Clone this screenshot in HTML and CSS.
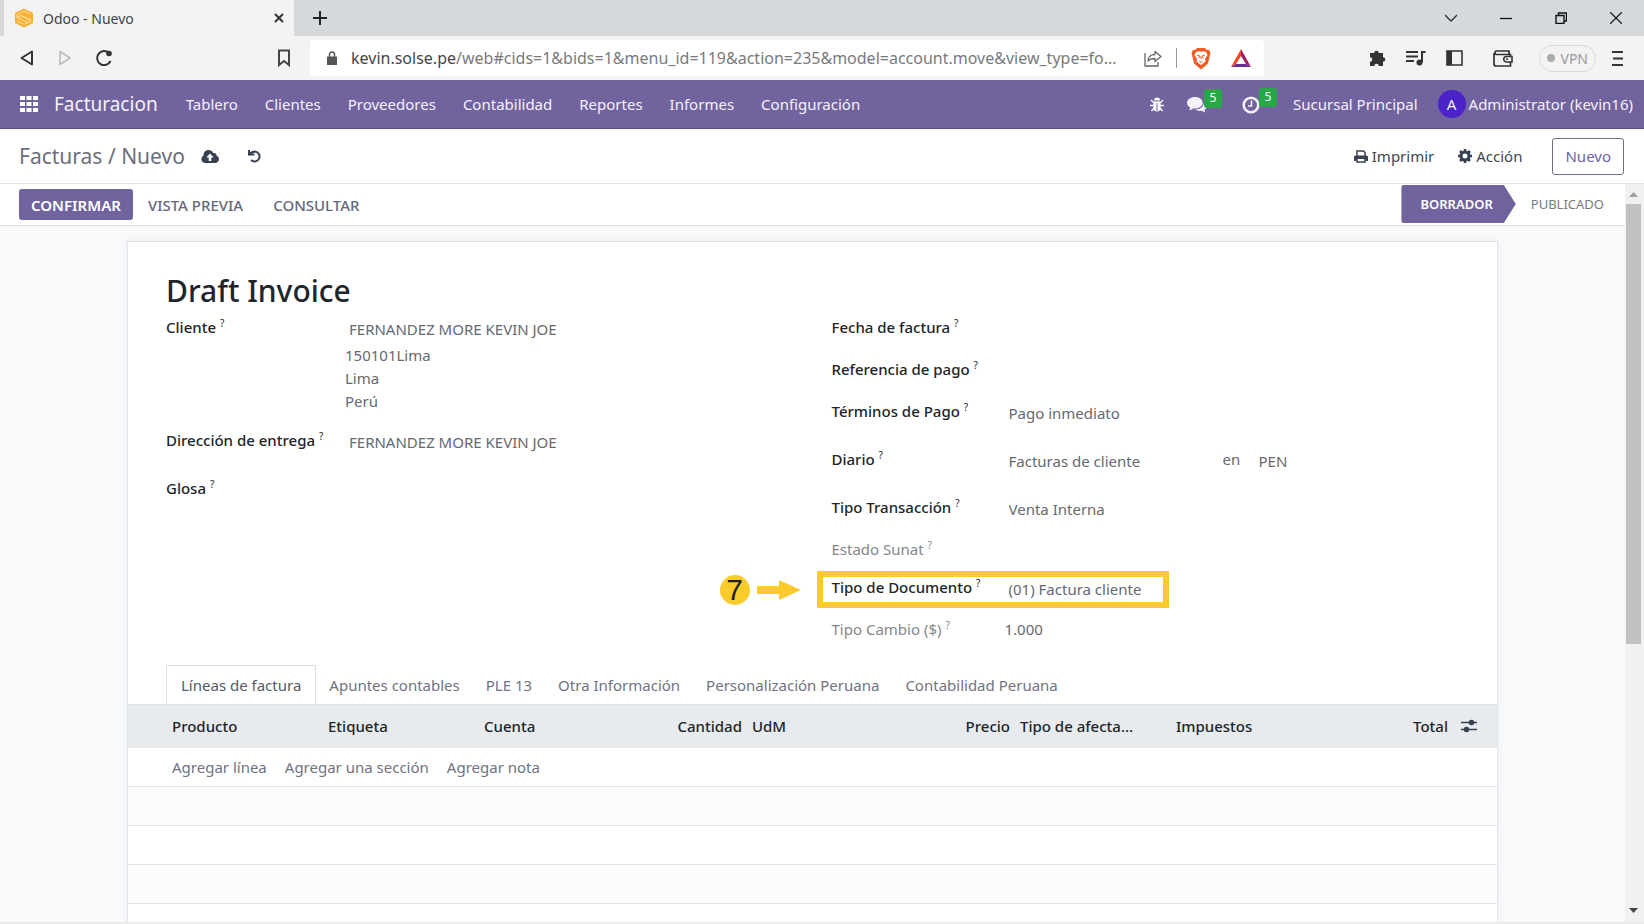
FILE: index.html
```html
<!DOCTYPE html>
<html lang="es">
<head>
	<meta charset="UTF-8">
	<title>Odoo - Nuevo</title>
	<link rel="stylesheet" href="styles.css">
</head>
<body>
	<div class="tabstrip">
		<div class="tab">
			<svg class="favicon" width="20" height="20" viewBox="0 0 20 20"><path d="M10 0.500 19 5v10l-9 4.500L1 15V5z" fill="#fbb034"/><path d="M3 6.500 10 3l6 3M3 9.500l4-2 10 5M3 7v2.500l11 5.500M6 7l11 5M3 13l7 3.500 7-3.500" fill="none" stroke="#fde3ae" stroke-width="1"/></svg>
			<span class="tab-title">Odoo - Nuevo</span>
			<button class="icon-btn" aria-label="Cerrar pestaña"><svg width="12" height="12" viewBox="0 0 12 12"><path d="M2 2l8 8M10 2l-8 8" stroke="#333" stroke-width="2"/></svg></button>
		</div>
		<button class="icon-btn new-tab" aria-label="Nueva pestaña"><svg width="14" height="14" viewBox="0 0 14 14"><path d="M7 0v14M0 7h14" stroke="#222" stroke-width="2"/></svg></button>
		<div class="window-btns">
			<button class="icon-btn" aria-label="Buscar pestañas"><svg width="12" height="12" viewBox="0 0 12 12"><path d="M0 3l6 6 6-6" fill="none" stroke="#333" stroke-width="1.300"/></svg></button>
			<button class="icon-btn" aria-label="Minimizar"><svg width="12" height="12" viewBox="0 0 12 12"><path d="M0 6.500h12" stroke="#111" stroke-width="1.300"/></svg></button>
			<button class="icon-btn" aria-label="Restaurar"><svg width="12" height="12" viewBox="0 0 12 12"><path d="M1 3.500h8v8H1zM3.500 3V1H11.500v8H9.500" fill="none" stroke="#111" stroke-width="1.400"/></svg></button>
			<button class="icon-btn" aria-label="Cerrar"><svg width="12" height="12" viewBox="0 0 12 12"><path d="M0 0l12 12M12 0L0 12" stroke="#222" stroke-width="1.300"/></svg></button>
		</div>
	</div>

	<div class="toolbar">
		<div class="history">
			<button class="icon-btn" aria-label="Atrás"><svg width="16" height="18" viewBox="0 0 16 18"><path d="M13 2.500v13L2.500 9z" fill="none" stroke="#333" stroke-width="2" stroke-linejoin="round"/></svg></button>
			<button class="icon-btn" aria-label="Adelante"><svg width="16" height="18" viewBox="0 0 16 18"><path d="M3 2.500v13L13 9z" fill="none" stroke="#bbb" stroke-width="1.600" stroke-linejoin="round"/></svg></button>
			<button class="icon-btn" aria-label="Recargar"><svg width="18" height="18" viewBox="0 0 18 18"><path d="M15.500 12A7 7 0 1 1 14 4" fill="none" stroke="#333" stroke-width="2"/><circle cx="14" cy="4.500" r="2.800" fill="#333"/></svg></button>
		</div>
		<button class="icon-btn bookmark" aria-label="Marcador"><svg width="14" height="18" viewBox="0 0 14 18"><path d="M2 1.500h10v14.500l-5-4-5 4z" fill="none" stroke="#444" stroke-width="2"/></svg></button>
		<div class="address">
			<svg width="10" height="14" viewBox="0 0 10 14"><path d="M0 5.500h10V14H0z" fill="#555"/><path d="M2.500 6V3.500a2.500 2.500 0 0 1 5 0V6" fill="none" stroke="#555" stroke-width="1.500"/></svg>
			<a class="url" href="#"><span class="host">kevin.solse.pe</span>/web#cids=1&amp;bids=1&amp;menu_id=119&amp;action=235&amp;model=account.move&amp;view_type=fo...</a>
			<button class="icon-btn" aria-label="Compartir"><svg width="18" height="18" viewBox="0 0 18 18"><path d="M1 4v13h13v-4" fill="none" stroke="#666" stroke-width="1.300"/><path d="M4 12c0-4 3-6.500 7-6.500V2.500l6 5-6 5V9.500c-3 0-5 0-7 2.500z" fill="none" stroke="#666" stroke-width="1.300" stroke-linejoin="round"/></svg></button>
			<span class="separator"></span>
			<button class="icon-btn" aria-label="Brave Shields"><svg width="20" height="23" viewBox="0 0 20 23"><path d="M6 1h8l1.500 1.800L18 3l1.500 3-.7 2.500-1.800 8L10 22.500 3 16.500l-1.800-8L.5 6 2 3l2.500-.2z" fill="#f15a22"/><path d="M5 5l3-.7 2 .5 2-.5 3 .7 1.500 3-2.500 4 .5 2.500L10 18l-4.500-3.500.5-2.500-2.500-4z" fill="#fff"/><path d="M6 8l2.500.8-.6 2.700M14 8l-2.500.8.6 2.700M10 9v3M8.500 14.500l1.500.8 1.500-.8" fill="none" stroke="#f15a22" stroke-width="1"/></svg></button>
			<button class="icon-btn rewards" aria-label="Brave Rewards"><svg width="22" height="20" viewBox="0 0 22 20"><path d="M11 1 1 19l5-3 5-8z" fill="#ff4724"/><path d="M11 1l10 18-5-3-5-8z" fill="#9e1f63"/><path d="M1 19h20l-5-3H6z" fill="#662d91"/></svg></button>
		</div>
		<div class="extensions">
			<button class="icon-btn" aria-label="Extensiones"><svg width="18" height="18" viewBox="0 0 18 18"><path d="M2 4h4.200a2.300 2.300 0 1 1 4.600 0H15v4.200a2.300 2.300 0 1 1 0 4.600V17h-4.200a2.200 2.200 0 0 0-4.400 0H2v-4.200a2.200 2.200 0 0 0 0-4.500z" fill="#333"/></svg></button>
			<button class="icon-btn" aria-label="Lista de reproducción"><svg width="20" height="16" viewBox="0 0 20 16"><path d="M0 2h12M0 6.500h12M0 11h8" stroke="#333" stroke-width="2"/><path d="M19.500 2H16v10.500" fill="none" stroke="#333" stroke-width="2"/><circle cx="13.500" cy="12.500" r="3" fill="#333"/></svg></button>
			<button class="icon-btn" aria-label="Panel lateral"><svg width="17" height="16" viewBox="0 0 17 16"><path d="M1 1h15v14H1z" fill="none" stroke="#333" stroke-width="1.600"/><path d="M1 1h5v14H1z" fill="#333"/></svg></button>
			<button class="icon-btn wallet" aria-label="Cartera"><svg width="20" height="17" viewBox="0 0 20 17"><path d="M17.500 6V4.500H3A2 2 0 0 1 3 1h13v3M1 3v11a2 2 0 0 0 2 2h14.500v-4" fill="none" stroke="#333" stroke-width="1.700"/><path d="M19 6.500h-5.500a2.700 2.700 0 0 0 0 5.500H19z" fill="none" stroke="#333" stroke-width="1.600"/><circle cx="14" cy="9.200" r="1" fill="#333"/></svg></button>
			<button class="vpn"><span class="dot"></span>VPN</button>
			<button class="icon-btn" aria-label="Menú"><svg width="11" height="15" viewBox="0 0 11 15"><path d="M0 1h11M1 7.500h10M0 14h11" stroke="#333" stroke-width="1.800"/></svg></button>
		</div>
	</div>

	<nav class="navbar">
		<button class="icon-btn" aria-label="Aplicaciones"><svg width="18" height="18" viewBox="0 0 18 18" fill="#fff"><path d="M0 1h5v4H0zM6.500 1h5v4h-5zM13 1h5v4h-5zM0 7h5v4H0zM6.500 7h5v4h-5zM13 7h5v4h-5zM0 13h5v4H0zM6.500 13h5v4h-5zM13 13h5v4h-5z"/></svg></button>
		<a class="brand" href="#">Facturacion</a>
		<div class="menu">
			<a href="#">Tablero</a>
			<a href="#">Clientes</a>
			<a href="#">Proveedores</a>
			<a href="#">Contabilidad</a>
			<a href="#">Reportes</a>
			<a href="#">Informes</a>
			<a href="#">Configuración</a>
		</div>
		<div class="systray">
			<button class="icon-btn" aria-label="Depurar"><svg width="14" height="15" viewBox="0 0 14 15"><path d="M4 3.500a3 3 0 0 1 6 0zM3.500 4.500h7v6a3.500 4 0 0 1-7 0z" fill="#fff"/><path d="M1 3l3 3M13 3l-3 3M0 8.500h14M1.500 14l3-3.500M12.500 14l-3-3.500" stroke="#fff" stroke-width="1.300"/><path d="M7 6v8" stroke="#71639e" stroke-width="1"/></svg></button>
			<button class="icon-btn tray" aria-label="Mensajes"><svg width="20" height="16" viewBox="0 0 20 16" fill="#f4f1fa"><path d="M8 0c4.400 0 7.700 2.600 7.700 5.800S12.400 11.500 8 11.500c-.7 0-1.300 0-1.900-.1-1.300 1-2.600 1.500-4.100 1.600.7-.8 1.200-1.500 1.200-2.500C1.200 9.400 0 7.700 0 5.800 0 2.600 3.600 0 8 0z"/><path d="M17 5c1.800.9 3 2.400 3 4.100 0 1.600-1 2.900-2.500 3.800 0 1 .5 1.700 1.200 2.500-1.500-.1-2.800-.7-4-1.600-2.600.4-5-.2-6.700-1.300C13 12.600 17 9.600 17 5z"/></svg><span class="badge">5</span></button>
			<button class="icon-btn tray" aria-label="Actividades"><svg width="18" height="18" viewBox="0 0 18 18" fill="none" stroke="#f4f1fa"><circle cx="9" cy="9" r="7.300" stroke-width="2.600"/><path d="M9.500 4.500V10H6" stroke-width="1.600"/></svg><span class="badge">5</span></button>
			<a class="company" href="#">Sucursal Principal</a>
			<a class="user" href="#"><span class="avatar">A</span>Administrator (kevin16)</a>
		</div>
	</nav>

	<header class="control-panel">
		<div class="breadcrumb"><a href="#">Facturas</a> / Nuevo</div>
		<button class="icon-btn" aria-label="Guardar"><svg width="18" height="13" viewBox="0 0 18 13"><path d="M4 13a4 4 0 0 1-1.500-7.500C2.300 2.500 4.500 0 7.500 0c2.200 0 4 1.200 4.800 3.200 1.800-.8 3.600.6 3.200 2.600C17 6.300 18 7.700 18 9.300c0 2-1.600 3.700-3.700 3.700z" fill="#374151"/><path d="M9 3.500l3.700 4H10.300V11H7.700V7.500H5.300z" fill="#fff"/></svg></button>
		<button class="icon-btn undo" aria-label="Descartar"><svg width="15" height="15" viewBox="0 0 15 15"><path d="M2 5.500h5.500M2.500 5.500C4 3.500 5.500 2.500 8 2.500a5 5 0 1 1-4 8.500" fill="none" stroke="#374151" stroke-width="2"/><path d="M1 1v5.500h2V1z" fill="#374151"/></svg></button>
		<div class="actions">
			<button class="action"><svg width="14" height="13" viewBox="0 0 14 13"><path d="M3 6V1h6.500L11 2.500V6" fill="none" stroke="#374151" stroke-width="1.500"/><path d="M1.500 5.500h11A1.500 1.500 0 0 1 14 7v4h-2.500V9h-9v2H0V7a1.500 1.500 0 0 1 1.500-1.500z" fill="#374151"/><path d="M3 9v3h8V9" fill="none" stroke="#374151" stroke-width="1.500"/></svg>Imprimir</button>
			<button class="action"><svg width="14" height="14" viewBox="0 0 14 14"><circle cx="7" cy="7" r="4" fill="none" stroke="#374151" stroke-width="3"/><path d="M7 0v3M7 11v3M0 7h3M11 7h3M2 2l2 2M10 10l2 2M12 2l-2 2M2 12l2-2" stroke="#374151" stroke-width="2.600"/></svg>Acción</button>
			<button class="create">Nuevo</button>
		</div>
	</header>

	<div class="view">
		<div class="form-view">
			<div class="statusbar">
				<button class="primary">CONFIRMAR</button>
				<button class="secondary">VISTA PREVIA</button>
				<button class="secondary">CONSULTAR</button>
				<div class="stages">
					<button class="stage current">BORRADOR</button>
					<button class="stage">PUBLICADO</button>
				</div>
			</div>

			<main class="content">
				<div class="sheet">
					<h1>Draft Invoice</h1>
					<div class="groups">
						<div class="group left">
							<div class="field partner">
								<label for="cliente">Cliente <sup>?</sup></label>
								<div>
									<input id="cliente" type="text" value="FERNANDEZ MORE KEVIN JOE">
									<address>150101Lima<br>Lima<br>Perú</address>
								</div>
							</div>
							<div class="field">
								<label for="entrega">Dirección de entrega <sup>?</sup></label>
								<input id="entrega" type="text" value="FERNANDEZ MORE KEVIN JOE">
							</div>
							<div class="field">
								<label for="glosa">Glosa <sup>?</sup></label>
								<input id="glosa" type="text">
							</div>
						</div>
						<div class="group right">
							<div class="field short">
								<label for="fecha">Fecha de factura <sup>?</sup></label>
								<input id="fecha" type="text">
							</div>
							<div class="field short">
								<label for="referencia">Referencia de pago <sup>?</sup></label>
								<input id="referencia" type="text">
							</div>
							<div class="field">
								<label for="terminos">Términos de Pago <sup>?</sup></label>
								<input id="terminos" type="text" value="Pago inmediato">
							</div>
							<div class="field">
								<label for="diario">Diario <sup>?</sup></label>
								<div class="journal">
									<input id="diario" type="text" value="Facturas de cliente">
									<label class="in" for="moneda">en</label>
									<input id="moneda" type="text" value="PEN">
								</div>
							</div>
							<div class="field short">
								<label for="transaccion">Tipo Transacción <sup>?</sup></label>
								<input id="transaccion" type="text" value="Venta Interna">
							</div>
							<div class="field readonly compact">
								<span class="label">Estado Sunat <sup>?</sup></span>
							</div>
							<div class="field short marked">
								<label for="documento">Tipo de Documento <sup>?</sup></label>
								<input id="documento" type="text" value="(01) Factura cliente">
								<div class="callout">
									<span class="step">7</span>
									<svg width="44" height="20" viewBox="0 0 44 20"><path d="M0 6h22V0l22 10-22 10v-6H0z" fill="#fbcb2c"/></svg>
								</div>
							</div>
							<div class="field readonly compact">
								<span class="label">Tipo Cambio ($) <sup>?</sup></span>
								<span class="value">1.000</span>
							</div>
						</div>
					</div>

					<div class="tabs">
						<button class="active">Líneas de factura</button>
						<button>Apuntes contables</button>
						<button>PLE 13</button>
						<button>Otra Información</button>
						<button>Personalización Peruana</button>
						<button>Contabilidad Peruana</button>
					</div>
					<table class="lines">
						<thead>
							<tr>
								<th class="handle"></th>
								<th class="mid">Producto</th>
								<th class="mid">Etiqueta</th>
								<th class="mid">Cuenta</th>
								<th class="qty number">Cantidad</th>
								<th class="mid">UdM</th>
								<th class="qty number">Precio</th>
								<th class="mid">Tipo de afecta...</th>
								<th class="mid">Impuestos</th>
								<th class="number">Total</th>
								<th class="options"><button class="icon-btn" aria-label="Columnas"><svg width="16" height="14" viewBox="0 0 16 14"><path d="M0 3.500h16M0 10.500h16" stroke="#374151" stroke-width="1.500"/><circle cx="10.500" cy="3.500" r="2.800" fill="#374151"/><circle cx="5.500" cy="10.500" r="2.800" fill="#374151"/></svg></button></th>
							</tr>
						</thead>
						<tbody>
							<tr>
								<td></td>
								<td colspan="10"><a href="#">Agregar línea</a><a href="#">Agregar una sección</a><a href="#">Agregar nota</a></td>
							</tr>
							<tr><td colspan="11"></td></tr>
							<tr><td colspan="11"></td></tr>
							<tr><td colspan="11"></td></tr>
						</tbody>
					</table>
				</div>
			</main>
		</div>
		<div class="scrollbar">
			<svg width="9" height="5" viewBox="0 0 9 5"><path d="M0 5l4.500-5L9 5z" fill="#a0a0a0"/></svg>
			<div class="thumb"></div>
			<svg class="down" width="9" height="5" viewBox="0 0 9 5"><path d="M0 0l4.500 5L9 0z" fill="#444"/></svg>
		</div>
	</div>
	<div class="bottom-edge"></div>
</body>
</html>
```
FILE: styles.css
```css
*,
*::before {
	box-sizing: border-box;
}
body {
	margin: 0;
	height: 100vh;
	overflow: hidden;
	display: flex;
	flex-direction: column;
	font-family: "Noto Sans", "Open Sans", sans-serif;
	font-size: 15px;
	color: #41464f;
	background-color: #fff;
}
a {
	color: inherit;
	text-decoration: none;
}
button,
input {
	font: inherit;
	color: inherit;
	background: none;
	border: 0;
	padding: 0;
	margin: 0;
}
svg {
	display: block;
}
.icon-btn {
	display: flex;
	align-items: center;
	justify-content: center;
	flex: none;
}

/* browser */
.tabstrip {
	height: 36px;
	flex: none;
	display: flex;
	align-items: center;
	background-color: #d5d9dc;
	padding-left: 4px;
}
.tab {
	width: 290px;
	height: 36px;
	display: flex;
	align-items: center;
	padding: 0 9px 0 10px;
	background-color: #f3f3f3;
	font-size: 14px;
	color: #444;
}
.tab-title {
	flex: 1;
	margin-left: 9px;
}
.new-tab {
	margin-left: 19px;
}
.window-btns {
	margin-left: auto;
	display: flex;
	gap: 43px;
	padding-right: 22px;
}
.toolbar {
	height: 44px;
	flex: none;
	display: flex;
	align-items: center;
	background-color: #f3f3f4;
	padding-right: 21px;
}
.history {
	display: flex;
	gap: 22px;
	padding-left: 19px;
}
.bookmark {
	margin-left: 164px;
}
.address {
	flex: 1;
	min-width: 0;
	height: 36px;
	display: flex;
	align-items: center;
	gap: 14px;
	margin: 0 104px 0 19px;
	padding: 0 12px 0 17px;
	background-color: #fff;
	border-radius: 4px;
}
.url {
	flex: 1;
	min-width: 0;
	overflow: hidden;
	white-space: nowrap;
	text-overflow: ellipsis;
	font-size: 16px;
	color: #7a7a7a;
}
.host {
	color: #444;
}
.separator {
	width: 1px;
	height: 20px;
	background-color: #999;
}
.rewards {
	margin-left: 5px;
}
.extensions {
	display: flex;
	align-items: center;
	gap: 20px;
}
.wallet {
	margin-left: 10px;
}
.vpn {
	height: 27px;
	display: flex;
	align-items: center;
	gap: 5px;
	padding: 0 7px;
	margin: 0 -4px 0 6px;
	border: 1px solid #d8d8d8;
	border-radius: 14px;
	font-size: 14px;
	color: #999;
}
.dot {
	width: 8px;
	height: 8px;
	border-radius: 50%;
	background-color: #aaa;
}

/* navbar */
.navbar {
	height: 49px;
	flex: none;
	display: flex;
	align-items: center;
	padding: 0 11px 0 20px;
	background-color: #71639e;
	border-bottom: 1px solid #5a4f7f;
	color: #f4f1fa;
}
.brand {
	margin-left: 16px;
	font-size: 19px;
}
.menu {
	display: flex;
	gap: 27px;
	margin-left: 28px;
}
.systray {
	margin-left: auto;
	display: flex;
	align-items: center;
}
.tray {
	position: relative;
	margin-left: 23px;
}
.tray + .tray {
	margin-left: 35px;
}
.badge {
	position: absolute;
	left: 17px;
	top: -6px;
	width: 18px;
	height: 19px;
	border-radius: 3px;
	background-color: #28a745;
	font-size: 12px;
	line-height: 18px;
	color: #fff;
}
.tray svg {
	margin-top: 2px;
}
.company {
	margin-left: 33px;
}
.user {
	display: flex;
	align-items: center;
	gap: 3px;
	margin-left: 20px;
}
.avatar {
	width: 28px;
	height: 28px;
	border-radius: 50%;
	background-color: #4b24c9;
	text-align: center;
	line-height: 28px;
}

/* control panel */
.control-panel {
	height: 55px;
	flex: none;
	display: flex;
	align-items: center;
	padding: 0 20px 0 19px;
	border-bottom: 1px solid #dee2e6;
}
.breadcrumb {
	font-size: 21px;
	color: #6b6f7c;
	margin-right: 16px;
}
.undo {
	margin-left: 28px;
}
.actions {
	margin-left: auto;
	display: flex;
	align-items: center;
	gap: 24px;
}
.action {
	display: flex;
	align-items: center;
	gap: 4px;
}
.create {
	height: 37px;
	padding: 0 12px;
	margin-left: 6px;
	border: 1px solid #6f6a85;
	border-radius: 3px;
	color: #71639e;
}

/* form */
.view {
	flex: 1;
	min-height: 0;
	display: flex;
}
.form-view {
	flex: 1;
	min-width: 0;
	display: flex;
	flex-direction: column;
	overflow: hidden;
}
.statusbar {
	height: 42px;
	flex: none;
	display: flex;
	align-items: center;
	padding-left: 19px;
	border-bottom: 1px solid #dee2e6;
}
.primary {
	height: 31px;
	padding: 0 12px;
	border-radius: 3px;
	background-color: #71639e;
	color: #fff;
	font-weight: 600;
}
.secondary {
	padding: 0 15px;
	font-weight: 500;
	color: #666878;
}
.stages {
	margin-left: auto;
	align-self: stretch;
	display: flex;
	padding: 1px 6px 2px 0;
	font-size: 13px;
}
.stage {
	padding: 0 15px;
	color: #777b80;
}
.stage.current {
	padding: 0 23px 0 19px;
	border-radius: 3px;
	background-color: #71639e;
	color: #fff;
	font-weight: 600;
	clip-path: polygon(0 0, calc(100% - 12px) 0, 100% 50%, calc(100% - 12px) 100%, 0 100%);
}
.content {
	flex: 1;
	min-height: 0;
	padding: 15px 127px 0;
	background-color: #f8f9fb;
}
.sheet {
	height: 100%;
	overflow: hidden;
	padding: 27px 36px 0 38px;
	background-color: #fff;
	border: 1px solid #e2e5e9;
	border-bottom: 0;
	box-shadow: 0 0 6px #e9ecef;
}
h1 {
	margin: 0;
	font-size: 30px;
	line-height: 44px;
	font-weight: 500;
	color: #212529;
}
.groups {
	display: grid;
	grid-template-columns: 1fr 1fr;
	column-gap: 36px;
	margin-top: 2px;
}
.field {
	position: relative;
	display: grid;
	grid-template-columns: 173px 1fr;
	align-items: start;
	height: 48px;
	line-height: 24px;
}
.left .field {
	grid-template-columns: 179px 1fr;
}
.field.partner {
	height: 113px;
}
.field.short {
	height: 42px;
}
.field.compact {
	height: 38px;
}
.field label {
	font-weight: 500;
	color: #212529;
}
.field sup {
	font-size: 10px;
	line-height: 0;
	font-weight: 400;
}
.field input {
	width: 100%;
	height: 24px;
	padding: 0 4px;
	margin-top: 2px;
	color: #66696f;
}
.field address {
	font-style: normal;
	line-height: 23px;
	color: #66696f;
	margin-top: 3px;
}
.field .journal {
	display: grid;
	grid-template-columns: 218px 32px 1fr;
	align-items: start;
}
.field .in {
	font-weight: 400;
	color: #66696f;
}
.readonly {
	color: #84888c;
}
.readonly .value {
	color: #66696f;
}
.marked::before {
	content: "";
	position: absolute;
	left: -15px;
	top: -4px;
	width: 352px;
	height: 37px;
	border: 6px solid #fbcb2c;
	pointer-events: none;
}
.callout {
	position: absolute;
	right: calc(100% + 31px);
	top: 0;
	display: flex;
	align-items: center;
	gap: 7px;
}
.step {
	width: 30px;
	height: 30px;
	border-radius: 50%;
	background-color: #fbcb2c;
	font-family: "Liberation Sans", sans-serif;
	font-size: 30px;
	line-height: 30px;
	text-align: center;
	color: #222;
}

/* notebook */
.tabs {
	display: flex;
	margin-top: 10px;
}
.tabs button {
	height: 39px;
	padding: 0 13px;
	color: #70737f;
}
.tabs .active {
	border: 1px solid #dee2e6;
	border-bottom: 0;
	padding: 0 14px;
	color: #565a62;
}
.lines {
	width: calc(100% + 74px);
	margin: 0 -36px 0 -38px;
	border-collapse: collapse;
	table-layout: fixed;
}
.lines th {
	height: 43px;
	padding: 0 5px;
	background-color: #e7ebed;
	border-top: 1px solid #dee2e6;
	text-align: left;
	font-weight: 500;
	color: #212529;
	white-space: nowrap;
}
.lines .handle {
	width: 39px;
}
.lines .mid {
	width: 156px;
}
.lines .qty {
	width: 112px;
}
.lines .number {
	text-align: right;
}
.lines .options {
	width: 44px;
	padding-left: 8px;
}
.lines td {
	height: 39px;
	padding: 0 5px;
	border-bottom: 1px solid #e2e5e8;
	color: #70737f;
}
.lines tbody tr:nth-child(even) td {
	background-color: #fcfcfc;
}
.lines td a {
	margin-right: 18px;
}

/* scrollbar */
.scrollbar {
	width: 19px;
	flex: none;
	display: flex;
	flex-direction: column;
	align-items: center;
	padding: 8px 3px 9px 1px;
	background-color: #f1f1f1;
}
.thumb {
	width: 100%;
	height: 61%;
	margin-top: 7px;
	background-color: #c1c1c1;
}
.down {
	margin-top: auto;
}
.bottom-edge {
	height: 2px;
	flex: none;
	background-color: #ebebeb;
}
```
